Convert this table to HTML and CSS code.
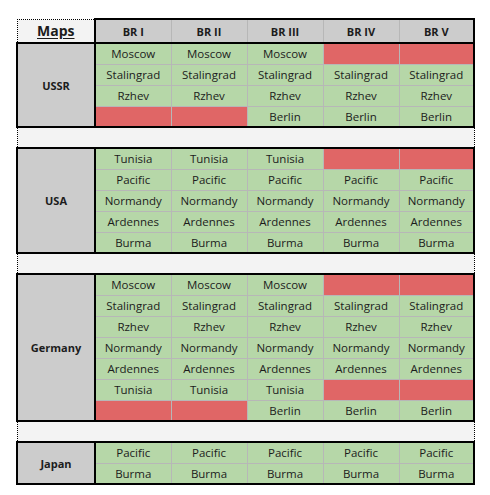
FILE: index.html
```html
<!DOCTYPE html>
<html>
<head>
<meta charset="utf-8">
<link rel="stylesheet" href="styles.css">
</head>
<body>
<table class="sheet">
  <colgroup>
    <col class="c-label"><col class="c-br"><col class="c-br"><col class="c-br"><col class="c-br"><col class="c-br-last">
  </colgroup>
  <thead>
    <tr class="head">
      <th class="corner"><span class="maps">Maps</span></th>
      <th>BR I</th><th>BR II</th><th>BR III</th><th>BR IV</th><th class="last">BR V</th>
    </tr>
  </thead>
  <tbody class="group">
    <tr class="first">
      <th class="nation" rowspan="4">USSR</th>
      <td>Moscow</td><td>Moscow</td><td>Moscow</td><td class="no"></td><td class="no last"></td>
    </tr>
    <tr><td>Stalingrad</td><td>Stalingrad</td><td>Stalingrad</td><td>Stalingrad</td><td class="last">Stalingrad</td></tr>
    <tr><td>Rzhev</td><td>Rzhev</td><td>Rzhev</td><td>Rzhev</td><td class="last">Rzhev</td></tr>
    <tr class="end"><td class="no"></td><td class="no"></td><td>Berlin</td><td>Berlin</td><td class="last">Berlin</td></tr>
  </tbody>
  <tbody><tr class="gap"><td colspan="6"></td></tr></tbody>
  <tbody class="group">
    <tr class="first">
      <th class="nation" rowspan="5">USA</th>
      <td>Tunisia</td><td>Tunisia</td><td>Tunisia</td><td class="no"></td><td class="no last"></td>
    </tr>
    <tr><td>Pacific</td><td>Pacific</td><td>Pacific</td><td>Pacific</td><td class="last">Pacific</td></tr>
    <tr><td>Normandy</td><td>Normandy</td><td>Normandy</td><td>Normandy</td><td class="last">Normandy</td></tr>
    <tr><td>Ardennes</td><td>Ardennes</td><td>Ardennes</td><td>Ardennes</td><td class="last">Ardennes</td></tr>
    <tr class="end"><td>Burma</td><td>Burma</td><td>Burma</td><td>Burma</td><td class="last">Burma</td></tr>
  </tbody>
  <tbody><tr class="gap"><td colspan="6"></td></tr></tbody>
  <tbody class="group">
    <tr class="first">
      <th class="nation" rowspan="7">Germany</th>
      <td>Moscow</td><td>Moscow</td><td>Moscow</td><td class="no"></td><td class="no last"></td>
    </tr>
    <tr><td>Stalingrad</td><td>Stalingrad</td><td>Stalingrad</td><td>Stalingrad</td><td class="last">Stalingrad</td></tr>
    <tr><td>Rzhev</td><td>Rzhev</td><td>Rzhev</td><td>Rzhev</td><td class="last">Rzhev</td></tr>
    <tr><td>Normandy</td><td>Normandy</td><td>Normandy</td><td>Normandy</td><td class="last">Normandy</td></tr>
    <tr><td>Ardennes</td><td>Ardennes</td><td>Ardennes</td><td>Ardennes</td><td class="last">Ardennes</td></tr>
    <tr><td>Tunisia</td><td>Tunisia</td><td>Tunisia</td><td class="no"></td><td class="no last"></td></tr>
    <tr class="end"><td class="no"></td><td class="no"></td><td>Berlin</td><td>Berlin</td><td class="last">Berlin</td></tr>
  </tbody>
  <tbody><tr class="gap"><td colspan="6"></td></tr></tbody>
  <tbody class="group">
    <tr class="first">
      <th class="nation" rowspan="2">Japan</th>
      <td>Pacific</td><td>Pacific</td><td>Pacific</td><td>Pacific</td><td class="last">Pacific</td>
    </tr>
    <tr class="end"><td>Burma</td><td>Burma</td><td>Burma</td><td>Burma</td><td class="last">Burma</td></tr>
  </tbody>
</table>
</body>
</html>
```

FILE: styles.css
```css
html, body {
  margin: 0;
  padding: 0;
  background: #ffffff;
}

body {
  padding: 18px 0 0 16px;
  font-family: "Open Sans", "Liberation Sans", sans-serif;
  font-size: 11.5px;
  color: #1c1c1c;
}

.sheet {
  border-collapse: collapse;
  table-layout: fixed;
  width: 457px;
}

.c-label { width: 78px; }
.c-br { width: 76px; }
.c-br-last { width: 75px; }

.sheet th,
.sheet td {
  padding: 0;
  text-align: center;
  vertical-align: middle;
  border: 1px solid #b7b7b7;
  white-space: nowrap;
  overflow: hidden;
}

.sheet tr { height: 21px; }
.sheet tr.head { height: 24px; }

.head th {
  background: #cccccc;
  font-weight: 700;
  font-size: 11px;
  border-top: 2px solid #000;
  border-bottom: 2px solid #000;
}

.head th.last { border-right: 2px solid #000; }

.head th.corner {
  background: #f3f3f3;
  border-top: 1px dotted #000;
  border-left: 1px dotted #000;
  border-right: 2px solid #000;
  border-bottom: 2px solid #000;
}

.maps {
  font-size: 14px;
  font-weight: 700;
  text-decoration: underline;
  text-underline-offset: 2px;
}

.group td {
  background: #b6d7a8;
}

.group td.no {
  background: #e06666;
}

.group td.last { border-right: 2px solid #000; }
.group tr.first td { border-top: 2px solid #000; }
.group tr.end td { border-bottom: 2px solid #000; }

.nation {
  background: #cccccc;
  font-weight: 700;
  font-size: 11px;
  border: 2px solid #000 !important;
}

.gap td {
  background: #f3f3f3;
  border-left: 1px dotted #000;
  border-right: 1px dotted #000;
  border-top: 2px solid #000;
  border-bottom: 2px solid #000;
}
```
